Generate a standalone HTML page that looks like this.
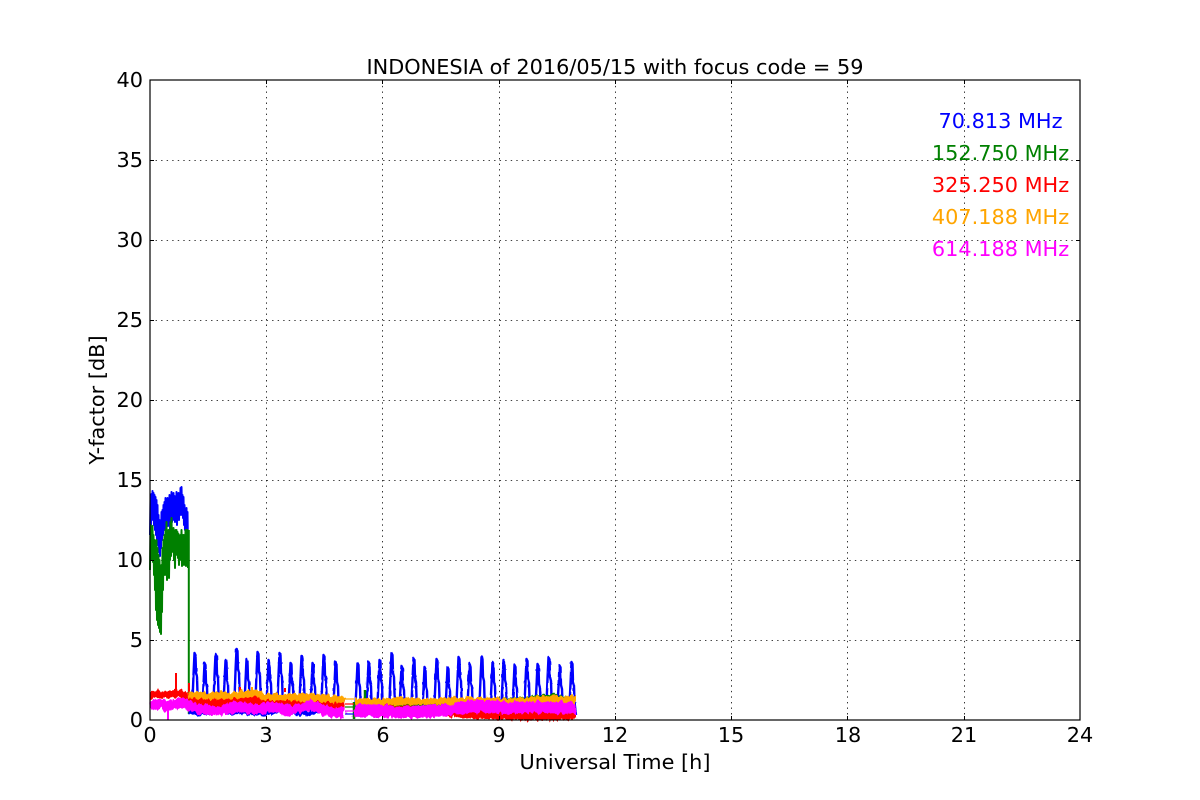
<!DOCTYPE html>
<html>
<head>
<meta charset="utf-8">
<style>
html,body{margin:0;padding:0;background:#fff;width:1200px;height:800px;overflow:hidden}
svg{display:block}
text{font-family:"DejaVu Sans","Liberation Sans",sans-serif;font-size:20.83px;fill:#000}
</style>
</head>
<body>
<svg width="1200" height="800" viewBox="0 0 1200 800" xmlns="http://www.w3.org/2000/svg">
<defs>
<filter id="n1" filterUnits="userSpaceOnUse" x="0" y="0" width="1200" height="800" color-interpolation-filters="sRGB">
<feTurbulence type="fractalNoise" baseFrequency="0.3 0.1" numOctaves="2" seed="4" result="t"/>
<feDisplacementMap in="SourceGraphic" in2="t" scale="7" xChannelSelector="G" yChannelSelector="R"/>
</filter>
<filter id="n2" filterUnits="userSpaceOnUse" x="0" y="0" width="1200" height="800" color-interpolation-filters="sRGB">
<feTurbulence type="fractalNoise" baseFrequency="0.3 0.15" numOctaves="1" seed="9" result="t"/>
<feDisplacementMap in="SourceGraphic" in2="t" scale="1.500" xChannelSelector="G" yChannelSelector="R"/>
</filter>
</defs>
<rect width="1200" height="800" fill="#fff"/>
<g stroke="#000" stroke-width="0.8" stroke-dasharray="1.4 4.15" fill="none">
<path d="M266.500 720V80M382.500 720V80M499.500 720V80M615.500 720V80M731.500 720V80M847.500 720V80M964.500 720V80"/>
<path d="M150 160.500H1080M150 240.500H1080M150 320.500H1080M150 400.500H1080M150 480.500H1080M150 560.500H1080M150 640.500H1080"/>
</g>
<!-- blue early band -->
<path fill="none" stroke="#0000ff" stroke-width="2" stroke-linejoin="round" d="M150 535L150.500 500 151 525 151.500 494 152 518 152.500 491 153 520 153.500 493 154 525 154.500 495 155 530 155.500 497 156 535 156.500 500 157 540 157.500 505 158 545 158.500 515 159 552 159.500 520 160 556 160.500 525 161 548 161.500 512 162 540 162.500 510 163 535 163.500 505 164 530 164.500 502 165 528 165.500 498 166 532 166.500 510 167 524 167.500 498 168 526 168.500 505 169 520 169.500 495 170 530 170.500 497 171 518 171.500 492 172 522 172.500 496 173 516 173.500 493 174 520 174.500 496 175 522 175.500 497 176 518 176.500 492 177 525 177.500 499 178 515 178.500 493 179 520 179.500 495 180 512 180.500 488 181 515 181.500 487 182 510 182.500 495 183 518 183.500 497 184 525 184.500 505 185 530 185.500 510 186 535 186.500 508 187 545 187.500 512 188 550"/>
<!-- green early band -->
<path fill="none" stroke="#008000" stroke-width="2" stroke-linejoin="round" d="M150 570L150.500 525 151 555 151.500 530 152 560 152.500 526 153 562 153.500 535 154 575 154.500 540 155 590 155.500 545 156 610 156.500 540 157 620 157.500 548 158 625 158.500 555 159 628 159.500 560 160 632 160.500 590 161 634 161.500 565 162 612 162.500 548 163 590 163.500 540 164 565 164.500 535 165 575 165.500 530 166 570 166.500 522 167 580 167.500 540 168 568 168.500 530 169 578 169.500 540 170 560 170.500 522 171 556 171.500 518 172 550 172.500 530 173 552 173.500 528 174 560 174.500 535 175 568 175.500 530 176 555 176.500 530 177 550 177.500 532 178 558 178.500 534 179 565 179.500 536 180 560 180.500 535 181 552 181.500 530 182 566 182.500 535 183 555 183.500 535 184 565 184.500 535 185 560 185.500 530 186 566 186.500 530 187 556 187.500 530 188 568"/>
<path fill="none" stroke="#008000" stroke-width="2" d="M188.800 530V714"/>
<!-- blue periodic spikes -->
<g filter="url(#n2)">
<path fill="none" stroke="#0000ff" stroke-width="2.400" stroke-linejoin="round" d="M192 713L193.500 675 194.500 653 195.500 655 196 673 197 677 197.500 693 199 713M202 713L203.500 685 204.500 663 205.500 665 206 683 207 687 207.500 703 209 713M213 713L214.500 676 215.500 654 216.500 656 217 674 218 678 218.500 694 220 713M223 713L224.500 682 225.500 660 226.500 662 227 680 228 684 228.500 700 230 713M234 713L235.500 671 236.500 649 237.500 651 238 669 239 673 239.500 689 241 713M244 713L245.500 681 246.500 659 247.500 661 248 679 249 683 249.500 699 251 713M255 713L256.500 674 257.500 652 258.500 654 259 672 260 676 260.500 692 262 713M266 713L267.500 682 268.500 660 269.500 662 270 680 271 684 271.500 700 273 713M277 713L278.500 675 279.500 653 280.500 655 281 673 282 677 282.500 693 284 713M288 713L289.500 685 290.500 663 291.500 665 292 683 293 687 293.500 703 295 713M299 713L300.500 678 301.500 656 302.500 658 303 676 304 680 304.500 696 306 713M310 713L311.500 685 312.500 663 313.500 665 314 683 315 687 315.500 703 317 713M321 713L322.500 677 323.500 655 324.500 657 325 675 326 679 326.500 695 328 713M333 713L334.500 684 335.500 662 336.500 664 337 682 338 686 338.500 702 340 713"/>
<path fill="none" stroke="#0000ff" stroke-width="2.400" stroke-linejoin="round" d="M355 715L356.500 685 357.500 663 358.500 665 359 683 360 687 360.500 703 362 715M366 715L367.500 684 368.500 662 369.500 664 370 682 371 686 371.500 702 373 715M377 715L378.500 682 379.500 660 380.500 662 381 680 382 684 382.500 700 384 715M389 715L390.500 675 391.500 653 392.500 655 393 673 394 677 394.500 693 396 715M399 715L400.500 688 401.500 666 402.500 668 403 686 404 690 404.500 706 406 715M411 715L412.500 680 413.500 658 414.500 660 415 678 416 682 416.500 698 418 715M422 715L423.500 689 424.500 667 425.500 669 426 687 427 691 427.500 707 429 715M434 715L435.500 681 436.500 659 437.500 661 438 679 439 683 439.500 699 441 715M445 715L446.500 689 447.500 667 448.500 669 449 687 450 691 450.500 707 452 715M456 715L457.500 679 458.500 657 459.500 659 460 677 461 681 461.500 697 463 715M467 715L468.500 685 469.500 663 470.500 665 471 683 472 687 472.500 703 474 715M479 715L480.500 679 481.500 657 482.500 659 483 677 484 681 484.500 697 486 715M490 715L491.500 684 492.500 662 493.500 664 494 682 495 686 495.500 702 497 715M501 715L502.500 682 503.500 660 504.500 662 505 680 506 684 506.500 700 508 715M512 715L513.500 687 514.500 665 515.500 667 516 685 517 689 517.500 705 519 715M524 715L525.500 681 526.500 659 527.500 661 528 679 529 683 529.500 699 531 715M535 715L536.500 686 537.500 664 538.500 666 539 684 540 688 540.500 704 542 715M546 715L547.500 679 548.500 657 549.500 659 550 677 551 681 551.500 697 553 715M557 715L558.500 687 559.500 665 560.500 667 561 685 562 689 562.500 705 564 715M569 715L570.500 684 571.500 662 572.500 664 573 682 574 686 574.500 702 576 715"/>
</g>
<!-- blue baseline dips -->
<g filter="url(#n1)">
<path fill="none" stroke="#0000ff" stroke-width="4" d="M188 712L200 714 215 713 240 712 262 714 280 711 300 714 320 712 345 711M354 714L380 715 400 714 430 715 460 714 500 715 540 714 575 714"/>
<path fill="none" stroke="#008000" stroke-width="5" d="M189 703L215 708 250 709 290 707 345 704M354 704L380 702 420 704 470 702 520 700 552 697 575 699"/>
</g>
<path fill="none" stroke="#008000" stroke-width="2.500" d="M354 702V719M365 690V700M553 694V700"/>
<!-- gap connecting lines -->
<g fill="none" stroke-width="1.200">
<path stroke="#ffa500" d="M345 699H354"/><path stroke="#ff0000" d="M345 704H354"/><path stroke="#008000" d="M345 707H354"/><path stroke="#ff00ff" d="M345 711H354"/><path stroke="#0000ff" d="M345 714H354"/>
</g>
<!-- red -->
<path fill="none" stroke="#ff0000" stroke-width="2" d="M176 692V673"/>
<path fill="none" stroke="#ff0000" stroke-width="2" d="M189 692V683M240 692V687M285 692V688"/>
<g filter="url(#n1)">
<path fill="none" stroke="#ff0000" stroke-width="7" stroke-linejoin="round" d="M150 695L158 694 165 695 172 694 178 693 185 695 190 697"/>
<path fill="none" stroke="#ff0000" stroke-width="11" stroke-linejoin="round" d="M189 701L205 703 225 702 250 700 285 699 310 702 330 704 345 705"/>
<path fill="none" stroke="#ff0000" stroke-width="9" stroke-linejoin="round" d="M354 707L380 709 410 710 440 712 470 714 500 715 540 716 575 715"/>
<!-- orange -->
<path fill="none" stroke="#ffa500" stroke-width="7" stroke-linejoin="round" d="M189 695L210 696 235 695 255 693 265 697 290 697 315 698 345 700"/>
<path fill="none" stroke="#ffa500" stroke-width="7" stroke-linejoin="round" d="M354 702L375 702 400 701 425 702 460 701 480 701 510 702 540 700 576 699"/>
<!-- magenta -->
<path fill="none" stroke="#ff00ff" stroke-width="10" stroke-linejoin="round" d="M150 705L160 704 167 706 175 704 182 702 190 706 205 710 220 711 235 707 255 709 275 707 290 711 310 705 330 712 345 713"/>
<path fill="none" stroke="#ff00ff" stroke-width="12" stroke-linejoin="round" d="M354 710L380 711 400 712 420 712 445 711 470 706 490 706 510 708 540 707 576 708"/>
</g>
<path fill="none" stroke="#ffa500" stroke-width="2" d="M252 695V687"/>
<path fill="none" stroke="#ff00ff" stroke-width="2" d="M168 708V720"/>
<!-- frame -->
<rect x="150" y="80" width="930" height="640" fill="none" stroke="#000" stroke-width="1.200"/>
<g stroke="#000" stroke-width="1" fill="none">
<path d="M266.500 80v4M382.500 80v4M499.500 80v4M615.500 80v4M731.500 80v4M847.500 80v4M964.500 80v4M266.500 720v-4M382.500 720v-4M499.500 720v-4M615.500 720v-4M731.500 720v-4M847.500 720v-4M964.500 720v-4"/>
<path d="M150 160.500h4M150 240.500h4M150 320.500h4M150 400.500h4M150 480.500h4M150 560.500h4M150 640.500h4M1080 160.500h-4M1080 240.500h-4M1080 320.500h-4M1080 400.500h-4M1080 480.500h-4M1080 560.500h-4M1080 640.500h-4"/>
</g>
<!-- tick labels -->
<g text-anchor="end">
<text x="143" y="87">40</text><text x="143" y="167">35</text><text x="143" y="247">30</text><text x="143" y="327">25</text><text x="143" y="407">20</text><text x="143" y="487">15</text><text x="143" y="567">10</text><text x="143" y="647">5</text><text x="143" y="727">0</text>
</g>
<g text-anchor="middle">
<text x="150" y="742">0</text><text x="266" y="742">3</text><text x="383" y="742">6</text><text x="499" y="742">9</text><text x="615" y="742">12</text><text x="731" y="742">15</text><text x="848" y="742">18</text><text x="964" y="742">21</text><text x="1080" y="742">24</text>
<text x="615" y="769">Universal Time [h]</text>
<text x="615" y="74">INDONESIA of 2016/05/15 with focus code = 59</text>
<text transform="translate(104 400) rotate(-90)">Y-factor [dB]</text>
<text x="1000.500" y="128" style="fill:#0000ff">70.813 MHz</text>
<text x="1000.500" y="160" style="fill:#008000">152.750 MHz</text>
<text x="1000.500" y="192" style="fill:#ff0000">325.250 MHz</text>
<text x="1000.500" y="224" style="fill:#ffa500">407.188 MHz</text>
<text x="1000.500" y="256" style="fill:#ff00ff">614.188 MHz</text>
</g>
</svg>
</body>
</html>
